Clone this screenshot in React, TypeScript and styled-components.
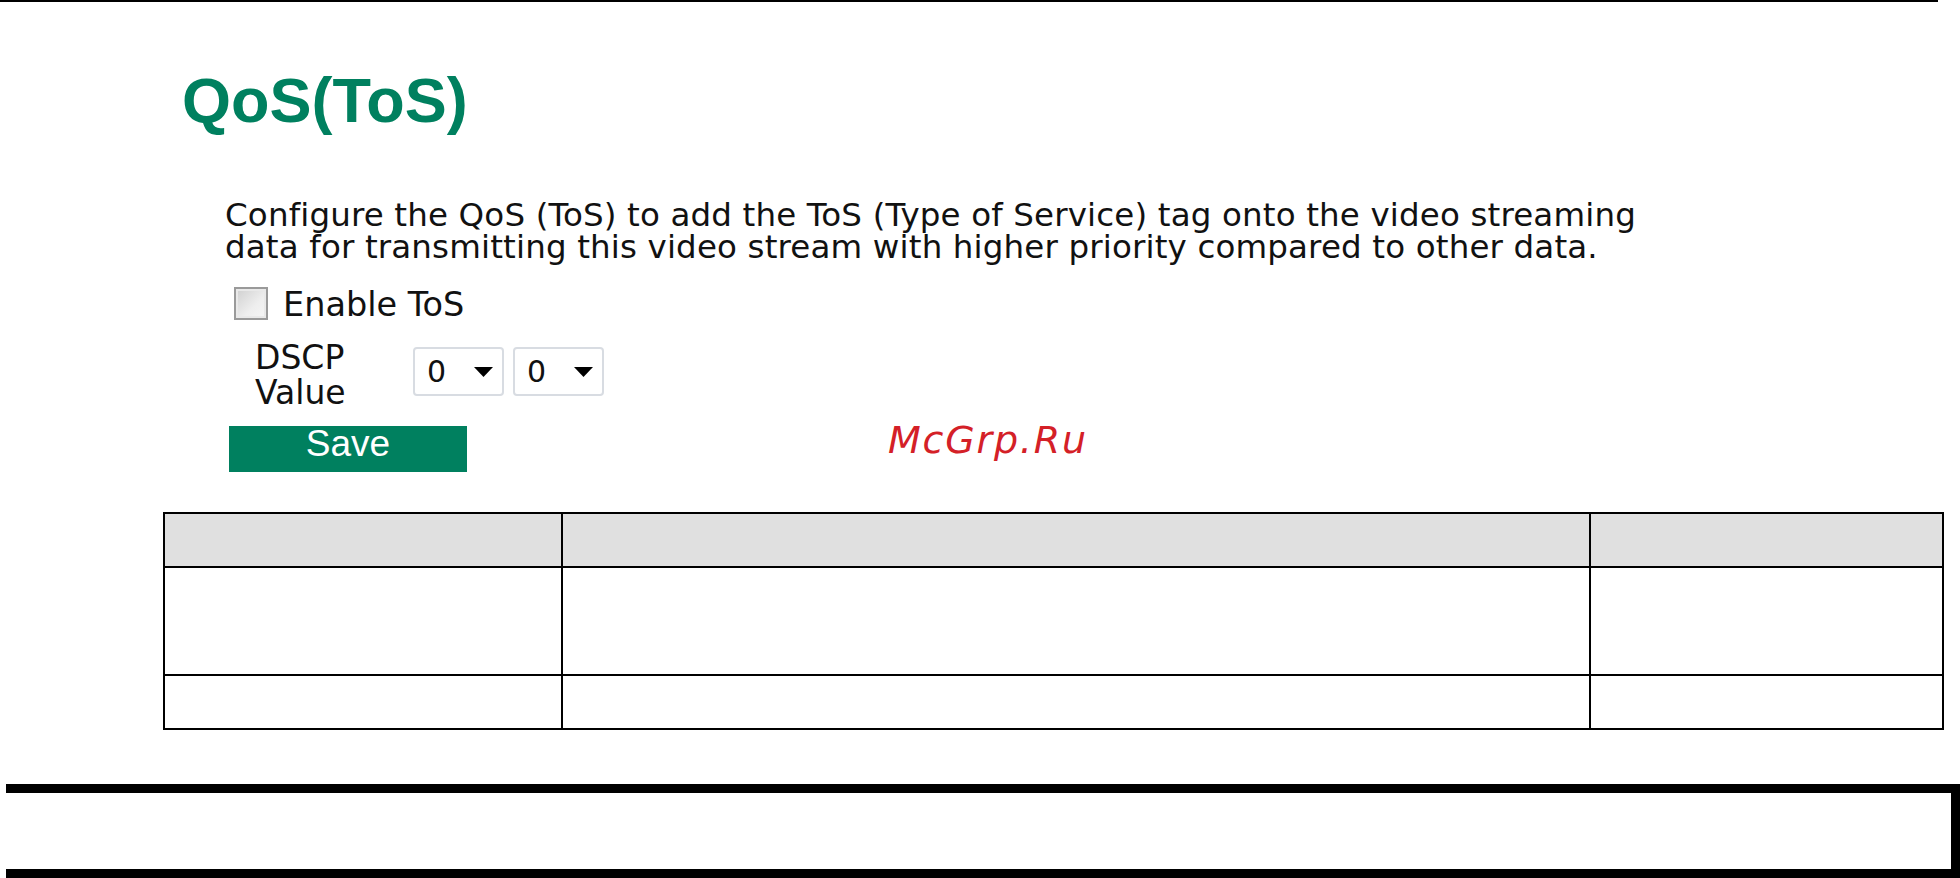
import React from "react";
import styled, {createGlobalStyle} from "styled-components";

const GlobalStyle = createGlobalStyle`
    html, body {
        margin: 0;
        padding: 0;
        background: #ffffff;
        overflow: hidden;
    }
`;

const GREEN = "#00805f";
const TEXT_FONT = `"DejaVu Sans", Verdana, sans-serif`;

const Page = styled.div`
    position: relative;
    width: 1960px;
    height: 878px;
    display: flex;
    flex-direction: column;
    font-family: ${TEXT_FONT};
    color: #111111;
`;

const TopRule = styled.div`
    width: 1938px;
    height: 2px;
    background: #000000;
`;

const Title = styled.h1`
    margin: 67px 0 0 182px;
    font-family: "Liberation Sans", Arial, sans-serif;
    font-weight: bold;
    font-size: 63px;
    line-height: 63px;
    color: ${GREEN};
`;

const Intro = styled.p`
    margin: 68px 0 0 225px;
    font-size: 32.5px;
    line-height: 31.6px;
    letter-spacing: 0.15px;
`;

const CheckRow = styled.div`
    margin: 24px 0 0 234px;
    height: 33px;
    display: flex;
    align-items: flex-start;
    gap: 15px;
    font-size: 33.5px;
`;

const CheckBox = styled.input`
    appearance: none;
    margin: 0;
    width: 34px;
    height: 33px;
    box-sizing: border-box;
    border: 2px solid #9a9a9a;
    box-shadow: inset 0 0 0 2px #e9e9e9;
    background: linear-gradient(135deg, #cfcfcf 0%, #eeeeee 60%, #f6f6f6 100%);
`;

const CheckText = styled.label`
    padding-top: 2px;
    line-height: 31px;
`;

const DscpRow = styled.div`
    margin: 20px 0 0 255px;
    display: flex;
    align-items: flex-start;
`;

const DscpLabel = styled.div`
    width: 158px;
    font-size: 33px;
    line-height: 35px;
`;

const Selects = styled.div`
    margin-top: 7px;
    display: flex;
    gap: 9px;
`;

const SelectBox = styled.div`
    width: 91px;
    height: 49px;
    box-sizing: border-box;
    border: 2px solid #d8dce2;
    border-radius: 4px;
    display: flex;
    align-items: center;
    justify-content: space-between;
    padding: 0 9px 0 12px;
    font-size: 30px;
    background: #ffffff;
`;

const SaveButton = styled.button`
    margin: 16px 0 0 229px;
    width: 238px;
    height: 46px;
    padding: 0 0 10px 0;
    border: none;
    background: ${GREEN};
    color: #ffffff;
    font-family: "Liberation Sans", Arial, sans-serif;
    font-size: 37px;
    line-height: 36px;
    text-align: center;
`;

const Watermark = styled.div`
    position: absolute;
    left: 888px;
    top: 421px;
    font-family: ${TEXT_FONT};
    font-style: italic;
    font-size: 38px;
    line-height: 38px;
    letter-spacing: 1.8px;
    color: #d42027;
`;

const Grid = styled.div`
    margin: 40px 0 0 163px;
    width: 1781px;
    display: grid;
    grid-template-columns: 396px 1026px 351px;
    grid-template-rows: 52px 106px 52px;
    gap: 2px;
    padding: 2px;
    box-sizing: border-box;
    background: #000000;
`;

const Cell = styled.div<{ $head?: boolean }>`
    background: ${({$head}) => ($head ? "#e0e0e0" : "#ffffff")};
`;

const FooterBox = styled.div`
    margin: 54px 0 0 6px;
    width: 1954px;
    height: 94px;
    box-sizing: border-box;
    border-top: 9px solid #000000;
    border-right: 9px solid #000000;
    border-bottom: 9px solid #000000;
`;

const Arrow = () => (
    <svg width="19" height="10" viewBox="0 0 19 10">
        <polygon points="0,0 19,0 9.5,10" fill="#000000"/>
    </svg>
);

const Select = ({value}: { value: string }) => (
    <SelectBox>
        <span>{value}</span>
        <Arrow/>
    </SelectBox>
);

const App = () => {
    const rows = [true, false, false];

    return (<Page>
        <GlobalStyle/>
        <TopRule/>
        <Title>QoS(ToS)</Title>
        <Intro>
            Configure the QoS (ToS) to add the ToS (Type of Service) tag onto the video streaming<br/>
            data for transmitting this video stream with higher priority compared to other data.
        </Intro>
        <CheckRow>
            <CheckBox type="checkbox" id="enable-tos"/>
            <CheckText htmlFor="enable-tos">Enable ToS</CheckText>
        </CheckRow>
        <DscpRow>
            <DscpLabel>DSCP<br/>Value</DscpLabel>
            <Selects>
                <Select value="0"/>
                <Select value="0"/>
            </Selects>
        </DscpRow>
        <SaveButton>Save</SaveButton>
        <Watermark>McGrp.Ru</Watermark>
        <Grid>
            {rows.map((head, r) => [0, 1, 2].map(c => <Cell key={`${r}-${c}`} $head={head}/>))}
        </Grid>
        <FooterBox/>
    </Page>);
};

export default App;
